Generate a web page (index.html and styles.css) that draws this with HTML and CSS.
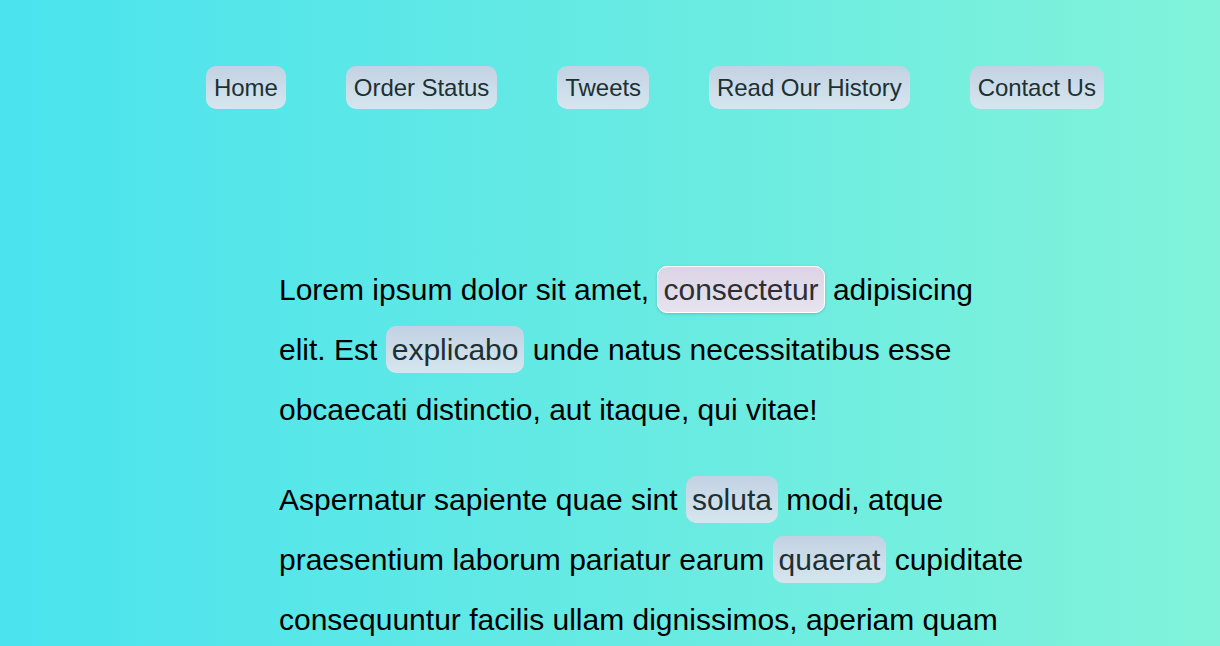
FILE: index.html
```html
<!DOCTYPE html>
<html lang="en">
<head>
<meta charset="utf-8">
<title>Lorem</title>
<link rel="stylesheet" href="styles.css">
</head>
<body>
<nav class="nav">
  <a class="pill nav-link" href="#">Home</a>
  <a class="pill nav-link" href="#">Order Status</a>
  <a class="pill nav-link" href="#">Tweets</a>
  <a class="pill nav-link" href="#">Read Our History</a>
  <a class="pill nav-link" href="#">Contact Us</a>
</nav>
<main class="content">
  <p class="text">Lorem ipsum dolor sit amet, <span class="pill word word-active">consectetur</span> adipisicing elit. Est <span class="pill word">explicabo</span> unde natus necessitatibus esse obcaecati distinctio, aut itaque, qui vitae!</p>
  <p class="text">Aspernatur sapiente quae sint <span class="pill word">soluta</span> modi, atque praesentium laborum pariatur earum <span class="pill word">quaerat</span> cupiditate consequuntur facilis ullam dignissimos, aperiam quam nostrum sint placeat eum dolores, at sapiente.</p>
</main>
</body>
</html>
```

FILE: styles.css
```css
html, body {
  margin: 0;
  height: 100%;
}

body {
  background: linear-gradient(to right, #4ae3ee 0%, #66eae3 50%, #82f3da 100%);
  font-family: "Liberation Sans", Arial, Helvetica, sans-serif;
  color: #000;
  overflow: hidden;
}

.nav {
  display: flex;
  gap: 60px;
  padding: 66px 0 0 206px;
}

.pill {
  background: linear-gradient(to bottom, #c3d2e3 0%, #d6e6ef 100%);
  color: #1d3032;
  border-radius: 10px;
  text-decoration: none;
}

.nav-link {
  display: block;
  font-size: 24px;
  line-height: 27px;
  padding: 8px 8px;
  letter-spacing: -0.05px;
}

.content {
  width: 746px;
  margin-left: 279px;
  padding-top: 121px;
}

.text {
  font-size: 30px;
  line-height: 60px;
  margin: 30px 0;
}

.word {
  padding: 7px 6px;
}

.word-active {
  background: linear-gradient(to bottom, #dcd4e5 0%, #e7e3ef 100%);
  color: #2e2e33;
  border: 1px solid #ffffff;
  padding: 6px 5px;
  box-shadow: 0 1px 3px rgba(40, 80, 90, 0.25);
}
```
